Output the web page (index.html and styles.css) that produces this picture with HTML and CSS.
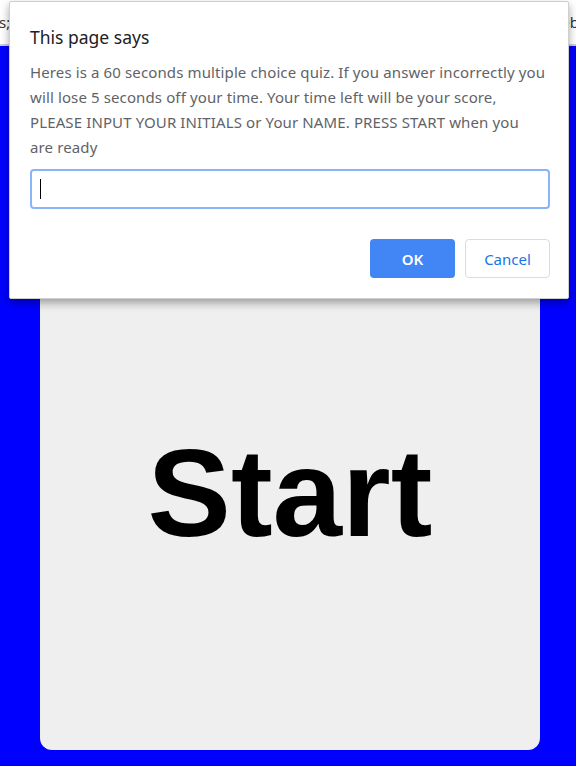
FILE: index.html
```html
<!DOCTYPE html>
<html>
<head>
<meta charset="utf-8">
<link rel="stylesheet" href="styles.css">
</head>
<body>
<header class="topbar">
  <span class="frag-left">s;</span>
  <span class="frag-right">eb</span>
</header>
<main class="stage">
  <div class="card">
    <div class="start">Start</div>
  </div>
</main>
<div class="dialog">
  <div class="dialog-title">This page says</div>
  <div class="dialog-msg">
    <span class="line">Heres is a 60 seconds multiple choice quiz. If you answer incorrectly you</span>
    <span class="line">will lose 5 seconds off your time. Your time left will be your score,</span>
    <span class="line">PLEASE INPUT YOUR INITIALS or Your NAME. PRESS START when you</span>
    <span class="line">are ready</span>
  </div>
  <div class="dialog-input"><span class="caret"></span></div>
  <div class="dialog-actions">
    <button class="btn btn-ok">OK</button>
    <button class="btn btn-cancel">Cancel</button>
  </div>
</div>
</body>
</html>
```
FILE: styles.css
```css
html, body {
  margin: 0;
  padding: 0;
}
body {
  background: #0000ff;
  width: 576px;
  height: 766px;
  overflow: hidden;
  position: relative;
  font-family: "Noto Sans", "Open Sans", sans-serif;
}
.topbar {
  height: 44px;
  background: #ffffff;
  border-bottom: 2px solid #cfcfcf;
  display: flex;
  justify-content: space-between;
  align-items: center;
  font-family: "Noto Sans", sans-serif;
  font-size: 15px;
  color: #333;
  overflow: hidden;
}
.frag-left {
  margin-left: -1px;
}
.frag-right {
  margin-right: -3px;
}
.stage {
  padding: 186px 36px 0 40px;
}
.card {
  width: 500px;
  height: 518px;
  background: #efefef;
  border-radius: 12px;
  display: flex;
  align-items: center;
  justify-content: center;
}
.start {
  font-family: "Liberation Sans", Arial, sans-serif;
  font-weight: bold;
  font-size: 125px;
  color: #000;
  line-height: 1;
  margin-top: 2px;
}
.dialog {
  position: absolute;
  left: 9px;
  top: 1px;
  width: 560px;
  height: 298px;
  background: #fff;
  border: 1px solid #cfcfcf;
  border-radius: 2px;
  box-shadow: 0 4px 8px rgba(0, 0, 0, 0.35);
  padding: 0 18px 0 20px;
  box-sizing: border-box;
}
.dialog-title {
  font-size: 17.5px;
  color: #202124;
  margin-top: 23px;
  line-height: 24px;
}
.dialog-msg {
  margin-top: 11px;
  font-size: 15px;
  letter-spacing: 0.12px;
  line-height: 25px;
  color: #5f6368;
  display: flex;
  flex-direction: column;
}
.line {
  white-space: nowrap;
}
.dialog-input {
  margin-top: 9px;
  height: 40px;
  box-sizing: border-box;
  border: 2px solid #8ab4f8;
  border-radius: 4px;
  display: flex;
  align-items: center;
  padding-left: 8px;
}
.caret {
  width: 1px;
  height: 20px;
  background: #000;
}
.dialog-actions {
  display: flex;
  justify-content: flex-end;
  gap: 10px;
  margin-top: 30px;
}
.btn {
  width: 85px;
  height: 39px;
  border-radius: 4px;
  font-family: "Noto Sans", "Open Sans", sans-serif;
  font-size: 15px;
  padding: 0;
  box-sizing: border-box;
}
.btn-ok {
  background: #4285f4;
  border: none;
  color: #fff;
  font-weight: 600;
}
.btn-cancel {
  background: #fff;
  border: 1px solid #dadce0;
  color: #1a73e8;
}
```
